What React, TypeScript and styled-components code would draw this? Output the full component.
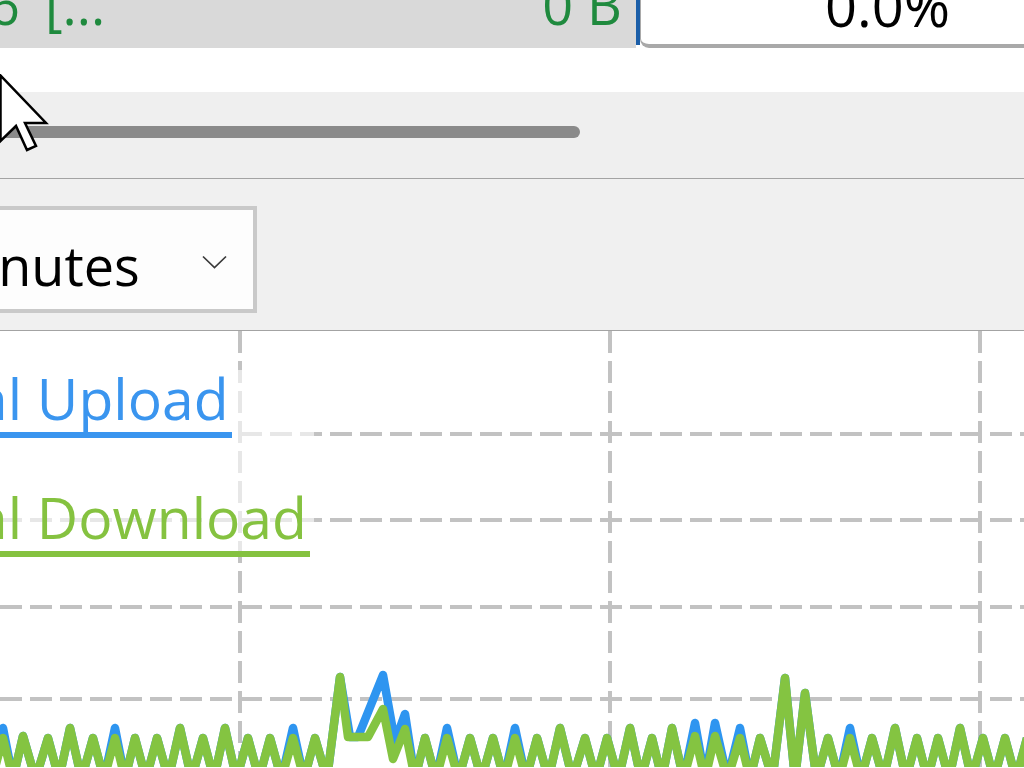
import React from "react";
import styled, { createGlobalStyle } from "styled-components";

const GlobalStyle = createGlobalStyle`
  html, body {
    margin: 0;
    padding: 0;
    background: #ffffff;
  }
  body {
    width: 1024px;
    height: 768px;
    overflow: hidden;
    font-family: "Open Sans", "Noto Sans", "Liberation Sans", sans-serif;
  }
`;

const Window = styled.div`
  position: relative;
  width: 1024px;
  height: 768px;
  display: flex;
  flex-direction: column;
  overflow: hidden;
  background: #ffffff;
`;

const TransferRow = styled.div`
  flex: none;
  display: flex;
  height: 48px;
  background: #ffffff;
`;

const NameCell = styled.div`
  flex: 0 0 636px;
  display: flex;
  justify-content: space-between;
  padding-right: 14px;
  box-sizing: border-box;
  background: #d9d9d9;
  color: #1f8a3e;
  font-size: 54px;
  line-height: 1;
  overflow: hidden;
  white-space: nowrap;
`;

const CellText = styled.span<{ $shift?: number }>`
  display: block;
  margin-top: -23px;
  margin-left: ${(p) => p.$shift ?? 0}px;
`;

const Bracket = styled.span`
  margin-left: 25px;
`;

const ProgressMarker = styled.div`
  flex: 0 0 4px;
  height: 45px;
  background: #1b5ea8;
`;

const ProgressCell = styled.div`
  flex: 1;
  height: 48px;
  box-sizing: border-box;
  padding-left: 184px;
  background: #ffffff;
  border-left: 1px solid #a9a9a9;
  border-bottom: 4px solid #a9a9a9;
  border-bottom-left-radius: 9px;
  color: #000000;
  font-size: 56px;
  line-height: 1;
  overflow: hidden;
  white-space: nowrap;
`;

const Spacer = styled.div`
  flex: none;
  height: 44px;
  background: #ffffff;
`;

const ScrollTrack = styled.div`
  flex: none;
  height: 86px;
  box-sizing: border-box;
  padding-top: 34px;
  background: #efefef;
`;

const ScrollThumb = styled.div`
  width: 580px;
  height: 12px;
  border-radius: 0 6px 6px 0;
  background: #8a8a8a;
`;

const Divider = styled.div`
  flex: none;
  height: 1px;
  background: #a3a3a3;
`;

const Toolbar = styled.div`
  flex: none;
  height: 151px;
  box-sizing: border-box;
  padding-top: 27px;
  background: #f0f0f0;
`;

const Combo = styled.div`
  display: flex;
  align-items: flex-start;
  justify-content: space-between;
  width: 347px;
  height: 107px;
  margin-left: -90px;
  box-sizing: border-box;
  padding: 28px 26px 0 22px;
  background: #fdfdfd;
  border: 4px solid #c9c9c9;
  color: #000000;
  font-size: 54px;
  line-height: 1;
  white-space: nowrap;
`;

const Chevron = styled.svg`
  flex: none;
  margin-top: 17px;
`;

const ChartArea = styled.div`
  position: relative;
  flex: 1;
  background: #ffffff;
  overflow: hidden;
`;

const Legend = styled.div`
  position: absolute;
  left: -110px;
  top: 39px;
  display: flex;
  flex-direction: column;
  align-items: flex-start;
  gap: 51px;
  padding-right: 4px;
  background: rgba(255, 255, 255, 0.6);
`;

const LegendItem = styled.div<{ $color: string }>`
  padding: 0 3px 5px 0;
  border-bottom: 6px solid ${(p) => p.$color};
  color: ${(p) => p.$color};
  font-size: 57px;
  line-height: 1;
  white-space: nowrap;
`;

const Cursor = styled.svg`
  position: absolute;
  left: -1px;
  top: 74px;
`;

const UPLOAD = "#3a95ef";
const DOWNLOAD = "#85c240";
const TOP = 332;
const LOW = 780;

type Peak = [number, number, number?];

const before: Peak[] = [
  [3, 735, 725], [23, 733], [48, 735], [70, 725], [93, 735], [115, 735, 725],
  [135, 735], [157, 735], [180, 725], [203, 735], [225, 725], [248, 735],
  [270, 735], [293, 735, 725], [315, 735],
];

const after: Peak[] = [
  [425, 735], [447, 735, 725], [470, 735], [493, 735], [515, 735, 725],
  [537, 735], [560, 725], [585, 735], [607, 735], [630, 725], [652, 735],
  [672, 725], [695, 733, 720], [715, 733, 720], [740, 735, 725], [760, 735],
  [785, 675], [805, 690], [828, 735], [850, 735, 725], [872, 735], [895, 725],
  [917, 735], [938, 735], [960, 725], [983, 735], [1005, 735], [1027, 735],
];

const greenBurst: [number, number][] = [
  [327, LOW], [340, 678], [348, 738], [368, 738], [383, 710], [393, 760], [405, 730], [415, LOW],
];

const blueBurst: [number, number][] = [
  [327, LOW], [340, 678], [350, 738], [358, 738], [383, 676], [395, 743], [405, 715], [415, LOW],
];

function zigzag(peaks: Peak[], blue: boolean): [number, number][] {
  const pts: [number, number][] = [];
  peaks.forEach(([x, top, hi], i) => {
    if (i > 0) pts.push([(peaks[i - 1][0] + x) / 2, LOW]);
    const y = blue && hi ? hi : top;
    pts.push([x, y + 4]);
  });
  return pts;
}

function series(blue: boolean): string {
  const pts = [
    [-8, LOW] as [number, number],
    ...zigzag(before, blue),
    ...(blue ? blueBurst : greenBurst),
    ...zigzag(after, blue),
  ];
  return pts.map(([x, y]) => `${x},${y - TOP}`).join(" ");
}

const gridX = [240, 610, 980];
const gridY = [435, 521, 608, 700];

function SpeedGraph() {
  return (
    <svg width="1024" height={768 - TOP} viewBox={`0 0 1024 ${768 - TOP}`}>
      <g stroke="#c2c2c2" strokeWidth="4" strokeDasharray="22 8">
        {gridX.map((x) => (
          <line key={x} x1={x} y1="0" x2={x} y2={768 - TOP} />
        ))}
        {gridY.map((y) => (
          <line key={y} x1="0" y1={y - TOP} x2="1024" y2={y - TOP} />
        ))}
      </g>
      <polyline points={series(true)} fill="none" stroke="#2e95f0" strokeWidth="8.5" strokeLinejoin="round" />
      <polyline points={series(false)} fill="none" stroke="#84c441" strokeWidth="8.5" strokeLinejoin="round" />
    </svg>
  );
}

export default function App() {
  return (
    <>
      <GlobalStyle />
      <Window>
        <TransferRow>
          <NameCell>
            <CellText $shift={-11}>
              6<Bracket>[...</Bracket>
            </CellText>
            <CellText>0 B</CellText>
          </NameCell>
          <ProgressMarker />
          <ProgressCell>
            <CellText>0.0%</CellText>
          </ProgressCell>
        </TransferRow>
        <Spacer />
        <ScrollTrack>
          <ScrollThumb />
        </ScrollTrack>
        <Divider />
        <Toolbar>
          <Combo>
            <span>Minutes</span>
            <Chevron width="25" height="14" viewBox="0 0 25 14">
              <polyline points="1,1.5 12.5,12.5 24,1.5" fill="none" stroke="#3a3a3a" strokeWidth="1.7" />
            </Chevron>
          </Combo>
        </Toolbar>
        <Divider />
        <ChartArea>
          <SpeedGraph />
          <Legend>
            <LegendItem $color={UPLOAD}>Total Upload</LegendItem>
            <LegendItem $color={DOWNLOAD}>Total Download</LegendItem>
          </Legend>
        </ChartArea>
        <Cursor width="52" height="82" viewBox="0 0 52 82">
          <polygon
            points="1.5,1.5 1.5,67 17,52 28,76 37,72 26,49 47,49"
            fill="#ffffff"
            stroke="#000000"
            strokeWidth="2.5"
            strokeLinejoin="miter"
          />
        </Cursor>
      </Window>
    </>
  );
}
